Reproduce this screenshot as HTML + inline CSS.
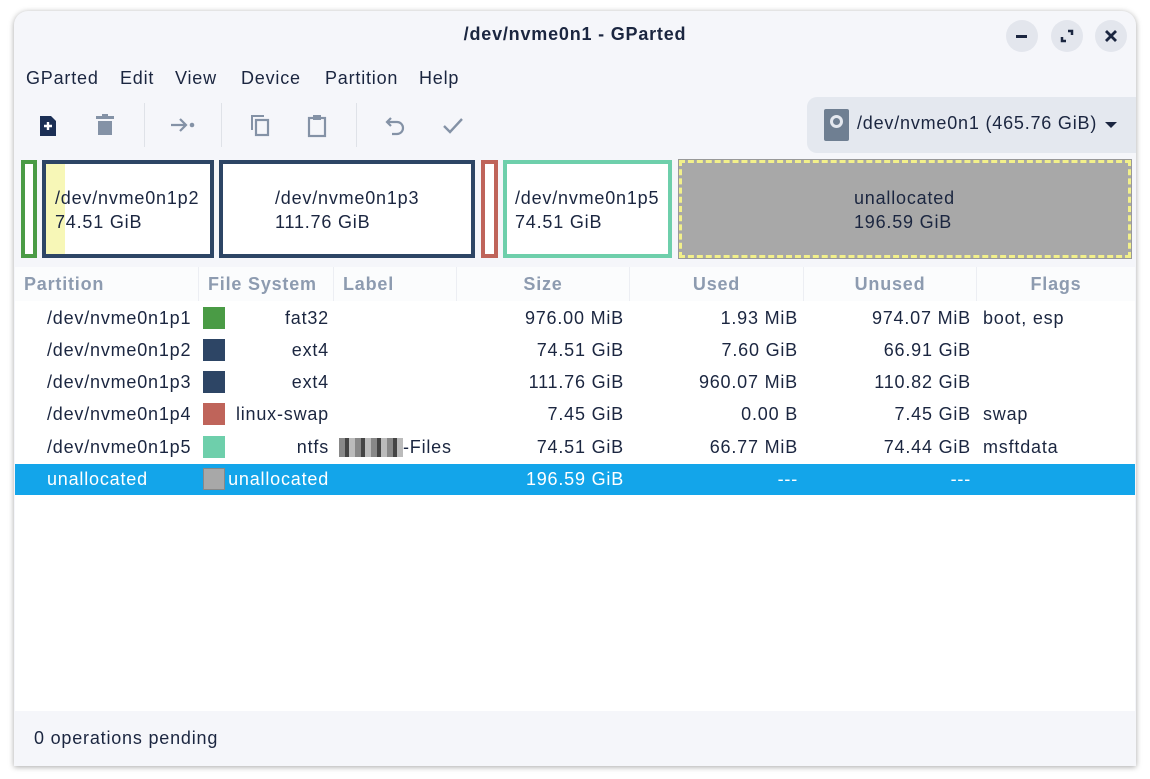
<!DOCTYPE html>
<html><head><meta charset="utf-8"><style>
*{margin:0;padding:0;box-sizing:border-box}
body{width:1150px;height:779px;background:#fff;font-family:"Liberation Sans",sans-serif;color:#1b2640;position:relative;overflow:hidden;letter-spacing:0.8px}
.win{position:absolute;left:14px;top:11px;width:1122px;height:755px;background:#f5f6fa;border-radius:14px 14px 0 0;box-shadow:0 1px 6px rgba(0,0,0,.35);overflow:hidden}
.a{position:absolute;white-space:nowrap}
.t{font-size:18px}
.circ{position:absolute;width:32px;height:32px;border-radius:50%;background:#e3e6ed;top:20px}
.seg{position:absolute;top:160px;height:98px;background:#fff}
.row{position:absolute;left:15px;width:1120px;height:32px;font-size:18px;line-height:32px}
.row span{position:absolute;white-space:nowrap}
.sw{position:absolute;width:22px;height:22px;top:5px;left:188px}
.hd{position:absolute;top:267px;height:34px;background:#fbfcfd;border-right:1px solid #eceef3;font-size:18px;font-weight:bold;color:#8d9bb0;line-height:34px;text-align:center}
.sep{position:absolute;top:103px;width:1px;height:44px;background:#dfe2e8}
</style></head><body>
<div class="win"></div>
<div class="a" style="left:0;top:24px;width:1150px;text-align:center;font-size:18px;font-weight:bold">/dev/nvme0n1 - GParted</div>
<div class="circ" style="left:1006px"></div><div class="circ" style="left:1051px"></div><div class="circ" style="left:1095px"></div>
<div class="a" style="left:1016px;top:35px;width:11px;height:2.5px;background:#1b2640"></div>
<svg class="a" style="left:1059px;top:28px" width="16" height="16"><path d="M3 9v4h4M13 7V3H9" stroke="#1b2640" stroke-width="2.5" fill="none"/></svg>
<svg class="a" style="left:1104px;top:29px" width="14" height="14"><path d="M2 2L12 12M12 2L2 12" stroke="#1b2640" stroke-width="2.8"/></svg>
<div class="a t" style="left:26px;top:68px">GParted</div>
<div class="a t" style="left:120px;top:68px">Edit</div>
<div class="a t" style="left:175px;top:68px">View</div>
<div class="a t" style="left:241px;top:68px">Device</div>
<div class="a t" style="left:325px;top:68px">Partition</div>
<div class="a t" style="left:419px;top:68px">Help</div>
<svg class="a" style="left:38px;top:115px" width="20" height="22"><path d="M2 1h11l5 5v15H2z" fill="#1b2f55"/><path d="M10 7v8M6 11h8" stroke="#fff" stroke-width="2.4"/></svg>
<svg class="a" style="left:94px;top:114px" width="22" height="22"><rect x="2" y="2" width="18" height="3" fill="#8492a6"/><rect x="8" y="0" width="6" height="3" fill="#8492a6"/><path d="M4 7h14v14H4z" fill="#8492a6"/></svg>
<div class="sep" style="left:144px"></div>
<svg class="a" style="left:170px;top:116px" width="26" height="18"><path d="M1 9h15M10 3l6 6-6 6" stroke="#8492a6" stroke-width="2.2" fill="none"/><circle cx="22" cy="9" r="2.3" fill="#8492a6"/></svg>
<div class="sep" style="left:221px"></div>
<svg class="a" style="left:250px;top:114px" width="22" height="24"><path d="M2 16V2h12" stroke="#8492a6" stroke-width="2" fill="none"/><rect x="6" y="6" width="12" height="15" stroke="#8492a6" stroke-width="2.2" fill="none"/></svg>
<svg class="a" style="left:307px;top:114px" width="20" height="24"><rect x="2" y="4" width="16" height="18" stroke="#8492a6" stroke-width="2.2" fill="none"/><rect x="6" y="1" width="8" height="5" fill="#8492a6"/></svg>
<div class="sep" style="left:356px"></div>
<svg class="a" style="left:385px;top:115px" width="22" height="22"><path d="M6 3L2 7l4 4M2 7h10a6 6 0 0 1 0 12H7" stroke="#8492a6" stroke-width="2.2" fill="none"/></svg>
<svg class="a" style="left:442px;top:116px" width="22" height="20"><path d="M2 10l6 6L20 3" stroke="#8492a6" stroke-width="2.4" fill="none"/></svg>
<div class="a" style="left:807px;top:97px;width:329px;height:56px;background:#e4e8ef;border-radius:10px 0 0 10px"></div>
<div class="a" style="left:824px;top:109px;width:25px;height:32px;background:#6f7f92;border-radius:2px"></div>
<div class="a" style="left:830px;top:115px;width:13px;height:13px;border-radius:50%;border:3px solid #e4e8ef"></div>
<div class="a t" style="left:857px;top:113px">/dev/nvme0n1 (465.76 GiB)</div>
<svg class="a" style="left:1104px;top:120px" width="14" height="10"><path d="M1 2h12L7 8z" fill="#1b2640"/></svg>

<div class="seg" style="left:21px;width:16px;border:4px solid #4a9b45"></div>
<div class="seg" style="left:42px;width:172px;border:4px solid #2d4565"><div style="position:absolute;left:0;top:0;width:19px;height:90px;background:#f7f7b7"></div></div>
<div class="seg" style="left:219px;width:256px;border:4px solid #2d4565"></div>
<div class="seg" style="left:481px;width:17px;border:4px solid #bf645a"></div>
<div class="seg" style="left:503px;width:169px;border:4px solid #6ecfab"></div>
<div class="seg" style="left:679px;width:452px;background:#a8a8a8;outline:1px solid #999;border:3px dashed #f2f08a"></div>
<div class="a t" style="left:55px;top:186px;line-height:24px">/dev/nvme0n1p2<br>74.51 GiB</div>
<div class="a t" style="left:275px;top:186px;line-height:24px">/dev/nvme0n1p3<br>111.76 GiB</div>
<div class="a t" style="left:515px;top:186px;line-height:24px">/dev/nvme0n1p5<br>74.51 GiB</div>
<div class="a t" style="left:854px;top:186px;line-height:24px">unallocated<br>196.59 GiB</div>

<div class="a" style="left:15px;top:267px;width:1120px;height:444px;background:#fff"></div>
<div class="hd" style="left:15px;width:184px;text-align:left;padding-left:9px">Partition</div>
<div class="hd" style="left:199px;width:135px;text-align:left;padding-left:9px">File System</div>
<div class="hd" style="left:334px;width:123px;text-align:left;padding-left:9px">Label</div>
<div class="hd" style="left:457px;width:173px">Size</div>
<div class="hd" style="left:630px;width:174px">Used</div>
<div class="hd" style="left:804px;width:173px">Unused</div>
<div class="hd" style="left:977px;width:158px;border-right:none">Flags</div>

<div class="row" style="top:302px"><span style="left:32px">/dev/nvme0n1p1</span><div class="sw" style="background:#4a9b45"></div><span style="right:806px">fat32</span><span style="right:511px">976.00 MiB</span><span style="right:337px">1.93 MiB</span><span style="right:164px">974.07 MiB</span><span style="left:968px">boot, esp</span></div>
<div class="row" style="top:334px"><span style="left:32px">/dev/nvme0n1p2</span><div class="sw" style="background:#2d4565"></div><span style="right:806px">ext4</span><span style="right:511px">74.51 GiB</span><span style="right:337px">7.60 GiB</span><span style="right:164px">66.91 GiB</span></div>
<div class="row" style="top:366px"><span style="left:32px">/dev/nvme0n1p3</span><div class="sw" style="background:#2d4565"></div><span style="right:806px">ext4</span><span style="right:511px">111.76 GiB</span><span style="right:337px">960.07 MiB</span><span style="right:164px">110.82 GiB</span></div>
<div class="row" style="top:398px"><span style="left:32px">/dev/nvme0n1p4</span><div class="sw" style="background:#bf645a"></div><span style="right:806px">linux-swap</span><span style="right:511px">7.45 GiB</span><span style="right:337px">0.00 B</span><span style="right:164px">7.45 GiB</span><span style="left:968px">swap</span></div>
<div class="row" style="top:431px"><span style="left:32px">/dev/nvme0n1p5</span><div class="sw" style="background:#6ecfab"></div><span style="right:806px">ntfs</span><div style="position:absolute;left:324px;top:7px;width:64px;height:19px;background:repeating-linear-gradient(90deg,#888 0 6px,#444 6px 10px,#bbb 10px 16px)"></div><span style="left:388px">-Files</span><span style="right:511px">74.51 GiB</span><span style="right:337px">66.77 MiB</span><span style="right:164px">74.44 GiB</span><span style="left:968px">msftdata</span></div>
<div class="row" style="top:464px;background:#13a5ea;color:#fff;height:31px;line-height:31px"><span style="left:32px">unallocated</span><div class="sw" style="background:#a8a8a8;top:4px;border:1px solid #888"></div><span style="right:806px">unallocated</span><span style="right:511px">196.59 GiB</span><span style="right:337px">---</span><span style="right:164px">---</span></div>

<div class="a t" style="left:34px;top:728px">0 operations pending</div>
</body></html>
